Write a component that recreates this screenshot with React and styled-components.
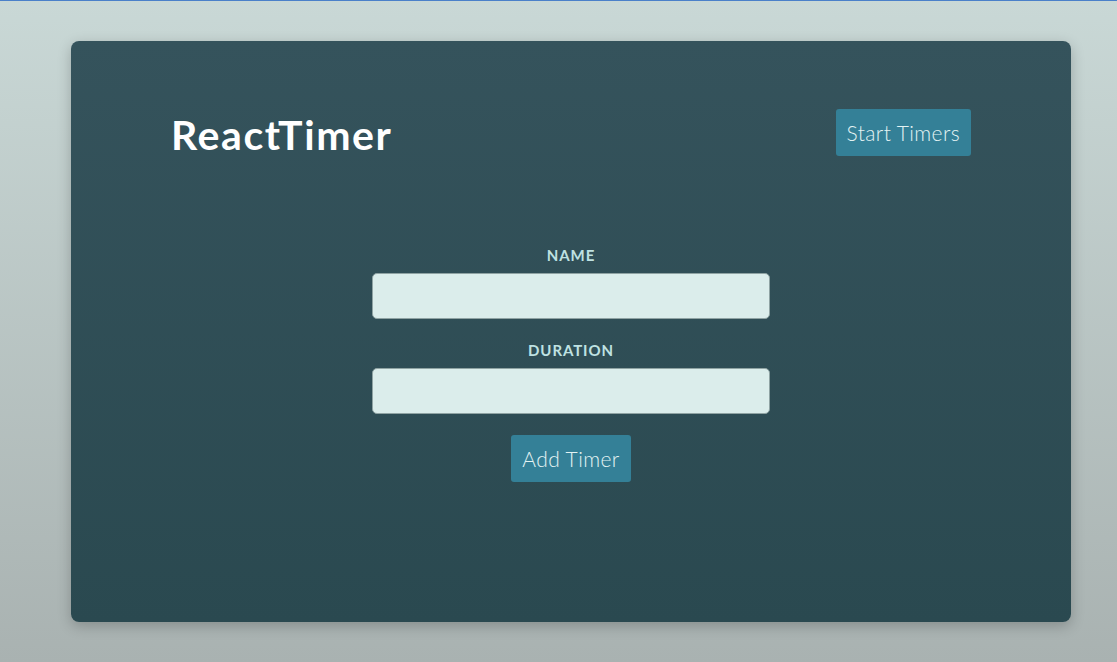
import React, { useState } from 'react';
import styled, { createGlobalStyle } from 'styled-components';

const GlobalStyle = createGlobalStyle`
  html, body {
    margin: 0;
    padding: 0;
  }
  body {
    font-family: 'Lato', 'Noto Sans', sans-serif;
    background: linear-gradient(180deg, #c9d8d6 0%, #a9b2b1 100%);
    min-height: 100vh;
    border-top: 1px solid #4a80c9;
    box-sizing: border-box;
  }
`

const Page = styled.div`
  padding: 40px 0 0 71px;
`

const Card = styled.div`
  width: 1000px;
  height: 581px;
  box-sizing: border-box;
  padding: 68px 100px;
  border-radius: 8px;
  background: linear-gradient(180deg, #35535c 0%, #2a4950 100%);
  box-shadow: 0 4px 14px rgba(0, 0, 0, 0.22);
`

const Header = styled.div`
  display: flex;
  justify-content: space-between;
  align-items: center;
  height: 47px;
`

const Title = styled.h1`
  margin: 0;
  padding-top: 3px;
  font-size: 41px;
  font-weight: 700;
  color: #ffffff;
  letter-spacing: 1.6px;
`

const Button = styled.button`
  height: 47px;
  padding: 0 11px;
  border: none;
  border-radius: 3px;
  background: #348097;
  color: #e3f3f3;
  font-family: inherit;
  font-size: 21px;
  font-weight: 300;
  letter-spacing: 0.4px;
  cursor: pointer;
`

const Form = styled.form`
  width: 398px;
  margin: 89px auto 0;
  display: flex;
  flex-direction: column;
  align-items: center;
`

const Label = styled.label`
  display: block;
  height: 20px;
  line-height: 20px;
  font-size: 15px;
  font-weight: 700;
  color: #bfe2e2;
  letter-spacing: 0.9px;
  margin-bottom: 8px;
`

const Input = styled.input`
  width: 100%;
  height: 46px;
  box-sizing: border-box;
  border: 1px solid #8fa3a3;
  border-radius: 5px;
  background: #dbedeb;
  padding: 0 12px;
  font-family: inherit;
  font-size: 16px;
  margin-bottom: ${({ $gap }) => $gap}px;
`

export default function App() {
  const [name, setName] = useState('')
  const [duration, setDuration] = useState('')

  return (
    <>
      <GlobalStyle />
      <Page>
        <Card>
          <Header>
            <Title>ReactTimer</Title>
            <Button type='button'>Start Timers</Button>
          </Header>

          <Form onSubmit={(e) => e.preventDefault()}>
            <Label htmlFor='name'>NAME</Label>
            <Input id='name' $gap={21} value={name} onChange={(e) => setName(e.target.value)} />
            <Label htmlFor='duration'>DURATION</Label>
            <Input id='duration' $gap={21} value={duration} onChange={(e) => setDuration(e.target.value)} />
            <Button type='submit'>Add Timer</Button>
          </Form>
        </Card>
      </Page>
    </>
  )
}
